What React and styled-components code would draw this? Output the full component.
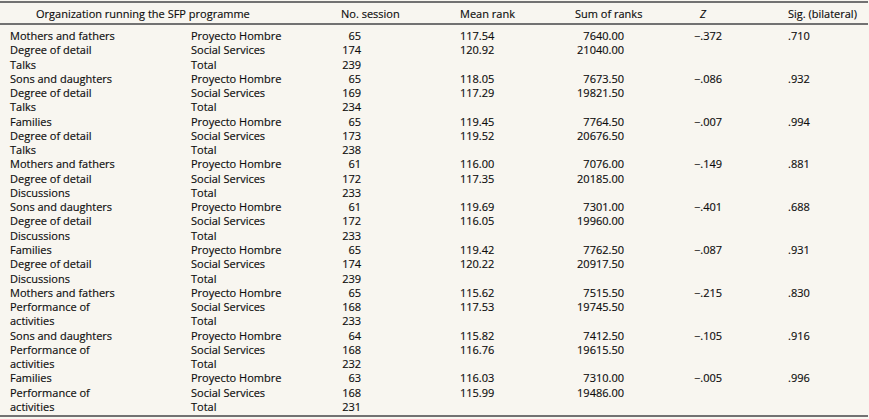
import React from 'react';
import styled, { createGlobalStyle } from 'styled-components';

const GlobalStyle = createGlobalStyle`
  html, body {
    margin: 0;
    padding: 0;
    background: #f8f6f0;
  }
`;

const COLS = '181px 150px 119px 115px 119px 94px 1fr';

const Table = styled.div`
  width: 868px;
  background: #f8f6f0;
  font-family: "Open Sans", "Noto Sans", sans-serif;
  font-size: 11px;
  color: #0d0d0d;
  -webkit-text-stroke: 0.15px #0d0d0d;
  border-top: 2px solid #727272;
  border-bottom: 2px solid #727272;
  margin-top: 1px;
  padding-left: 10px;
  box-sizing: border-box;
`;

const HeaderRow = styled.div`
  display: grid;
  grid-template-columns: ${COLS};
  height: 20px;
  align-items: center;
  border-bottom: 2px solid #727272;
  margin-left: -10px;
  padding-left: 10px;
`;

const BodyRows = styled.div`
  padding: 4px 0 1px;
`;

const Row = styled.div`
  display: grid;
  grid-template-columns: ${COLS};
  height: 14.27px;
  line-height: 14.27px;
  white-space: nowrap;
`;

const Cell = styled.div`
  text-align: ${({ $right }) => ($right ? 'right' : 'left')};
  padding-right: ${({ $pr }) => $pr || 0}px;
  padding-left: ${({ $pl }) => $pl || 0}px;
  font-style: ${({ $italic }) => ($italic ? 'italic' : 'normal')};
  grid-column: ${({ $span }) => ($span ? `span ${$span}` : 'auto')};
  white-space: nowrap;
`;

const groups = [
  ['Mothers and fathers', 'Degree of detail', 'Talks', ['65', '117.54', '7640.00'], ['174', '120.92', '21040.00'], '239', '\u2212.372', '.710'],
  ['Sons and daughters', 'Degree of detail', 'Talks', ['65', '118.05', '7673.50'], ['169', '117.29', '19821.50'], '234', '\u2212.086', '.932'],
  ['Families', 'Degree of detail', 'Talks', ['65', '119.45', '7764.50'], ['173', '119.52', '20676.50'], '238', '\u2212.007', '.994'],
  ['Mothers and fathers', 'Degree of detail', 'Discussions', ['61', '116.00', '7076.00'], ['172', '117.35', '20185.00'], '233', '\u2212.149', '.881'],
  ['Sons and daughters', 'Degree of detail', 'Discussions', ['61', '119.69', '7301.00'], ['172', '116.05', '19960.00'], '233', '\u2212.401', '.688'],
  ['Families', 'Degree of detail', 'Discussions', ['65', '119.42', '7762.50'], ['174', '120.22', '20917.50'], '239', '\u2212.087', '.931'],
  ['Mothers and fathers', 'Performance of', 'activities', ['65', '115.62', '7515.50'], ['168', '117.53', '19745.50'], '233', '\u2212.215', '.830'],
  ['Sons and daughters', 'Performance of', 'activities', ['64', '115.82', '7412.50'], ['168', '116.76', '19615.50'], '232', '\u2212.105', '.916'],
  ['Families', 'Performance of', 'activities', ['63', '116.03', '7310.00'], ['168', '115.99', '19486.00'], '231', '\u2212.005', '.996'],
];

const DataRow = ({ label, org, n, mean, sum, z, sig }) => (
  <Row>
    <Cell>{label}</Cell>
    <Cell>{org}</Cell>
    <Cell $right $pr={99}>{n}</Cell>
    <Cell>{mean}</Cell>
    <Cell $right $pr={70}>{sum}</Cell>
    <Cell>{z}</Cell>
    <Cell>{sig}</Cell>
  </Row>
);

export default function App() {
  return (
    <>
      <GlobalStyle />
      <Table>
        <HeaderRow>
          <Cell $span={2} $pl={26}>Organization running the SFP programme</Cell>
          <Cell>No. session</Cell>
          <Cell>Mean rank</Cell>
          <Cell>Sum of ranks</Cell>
          <Cell $italic $pl={6}>Z</Cell>
          <Cell>Sig. (bilateral)</Cell>
        </HeaderRow>
        <BodyRows>
          {groups.map(([a, b, c, ph, ss, total, z, sig], i) => (
            <React.Fragment key={i}>
              <DataRow label={a} org="Proyecto Hombre" n={ph[0]} mean={ph[1]} sum={ph[2]} z={z} sig={sig} />
              <DataRow label={b} org="Social Services" n={ss[0]} mean={ss[1]} sum={ss[2]} />
              <DataRow label={c} org="Total" n={total} />
            </React.Fragment>
          ))}
        </BodyRows>
      </Table>
    </>
  );
}
